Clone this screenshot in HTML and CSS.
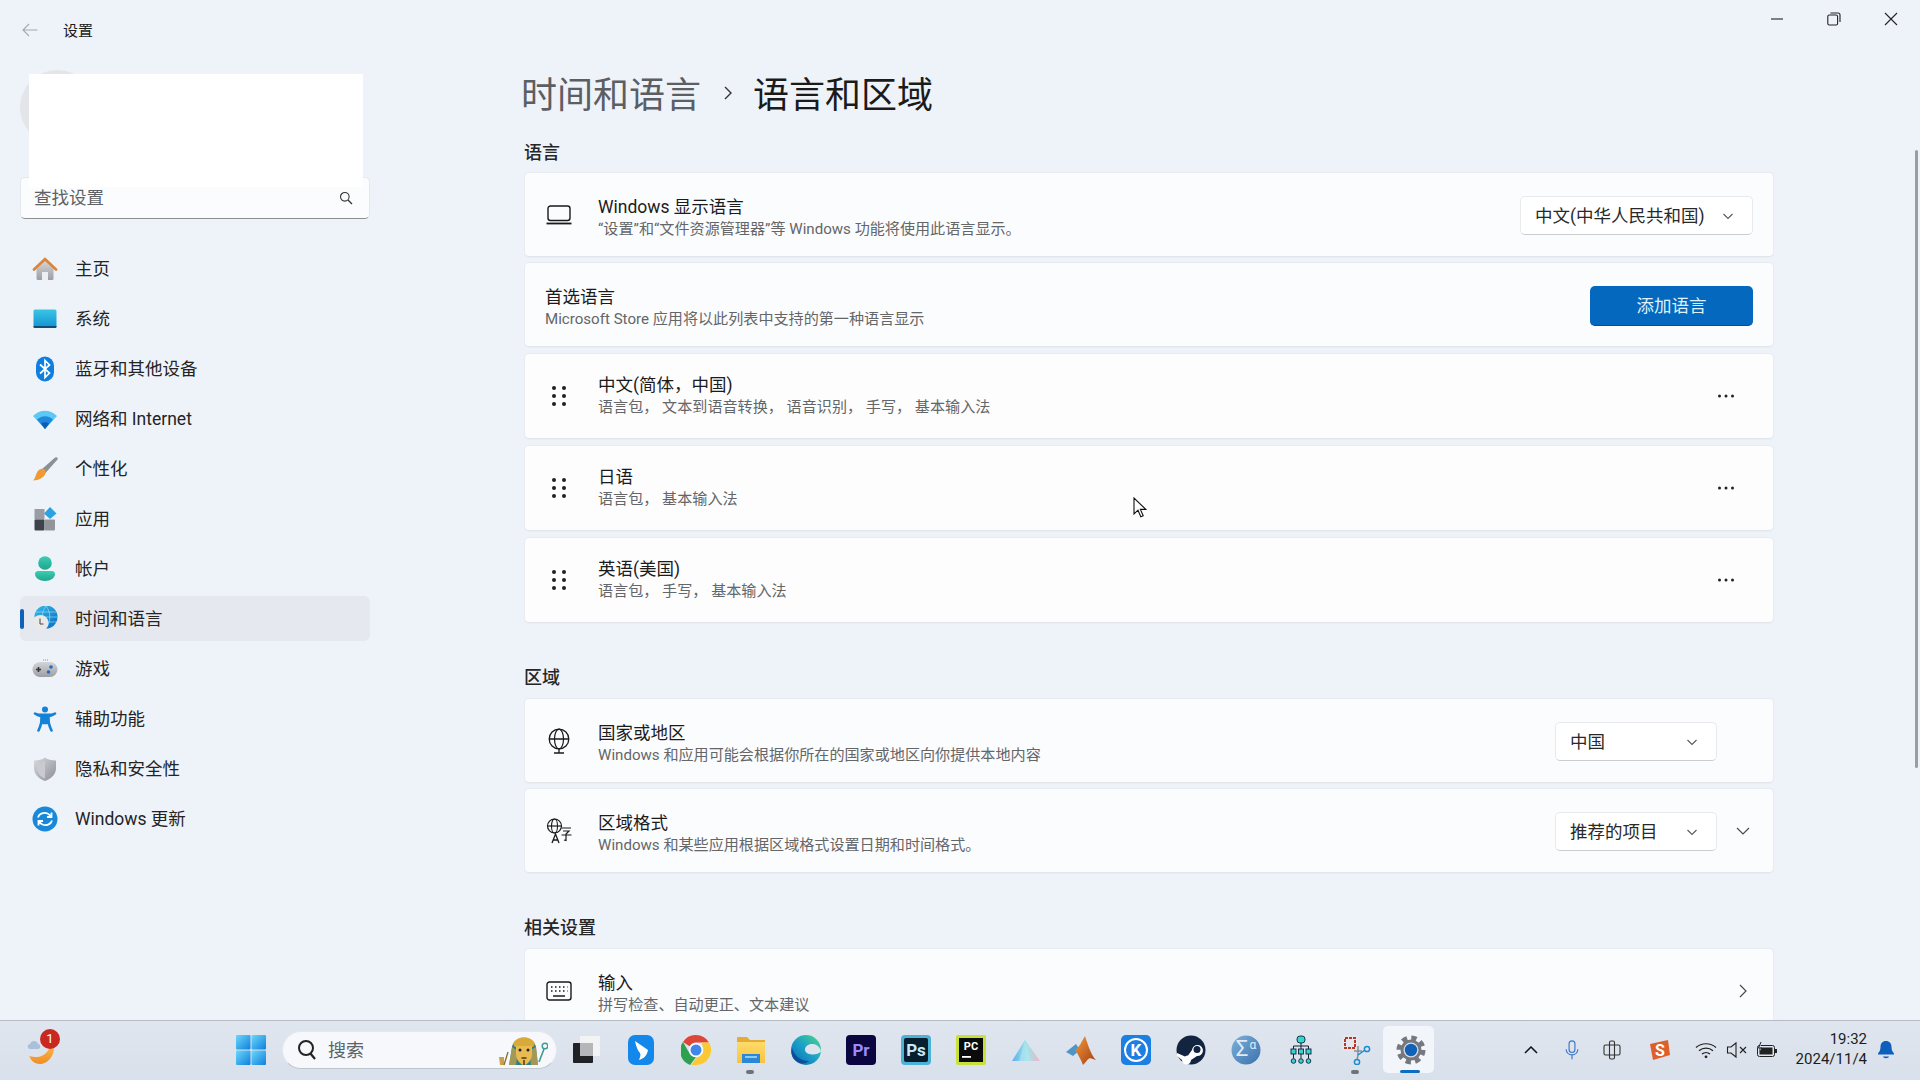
FILE: index.html
```html
<!DOCTYPE html>
<html lang="zh-CN">
<head>
<meta charset="utf-8">
<title>设置</title>
<link rel="stylesheet" href="styles.css">
</head>
<body>
<svg class="defs" aria-hidden="true">
  <defs>
    <linearGradient id="gGray" x1="0" y1="0" x2="0" y2="1"><stop offset="0" stop-color="#d4d5d8"/><stop offset="1" stop-color="#9c9ea3"/></linearGradient>
    <linearGradient id="gCyan" x1="0" y1="0" x2="0" y2="1"><stop offset="0" stop-color="#38c6e6"/><stop offset="1" stop-color="#1490cf"/></linearGradient>
    <linearGradient id="gTeal" x1="0" y1="0" x2="0" y2="1"><stop offset="0" stop-color="#3ccdb2"/><stop offset="1" stop-color="#1fa58f"/></linearGradient>
    <linearGradient id="gBlue" x1="0" y1="0" x2="1" y2="1"><stop offset="0" stop-color="#37bbe8"/><stop offset="1" stop-color="#0a6cc4"/></linearGradient>
    <linearGradient id="gShield" x1="0" y1="0" x2="1" y2="1"><stop offset="0" stop-color="#d8dade"/><stop offset="1" stop-color="#8b8e95"/></linearGradient>
    <linearGradient id="gWin" x1="0" y1="0" x2="1" y2="1"><stop offset="0" stop-color="#6bd8fa"/><stop offset="1" stop-color="#0f7fdc"/></linearGradient>
    <linearGradient id="gFolder" x1="0" y1="0" x2="0" y2="1"><stop offset="0" stop-color="#ffdb6b"/><stop offset="1" stop-color="#f7c43a"/></linearGradient>
    <linearGradient id="gEdge" x1="1" y1="0" x2="0" y2="1"><stop offset="0" stop-color="#4fd88a"/><stop offset=".5" stop-color="#1aa0c8"/><stop offset="1" stop-color="#0b62b4"/></linearGradient>
    <linearGradient id="gPrism" x1="0" y1="0" x2="1" y2="0"><stop offset="0" stop-color="#5cb0f0"/><stop offset=".55" stop-color="#9fe4e8"/><stop offset="1" stop-color="#f4b4c8"/></linearGradient>
    <linearGradient id="gMat" x1="0" y1="0" x2="1" y2="1"><stop offset="0" stop-color="#f59a3a"/><stop offset="1" stop-color="#a23c14"/></linearGradient>
    <linearGradient id="gSigma" x1="0" y1="0" x2="1" y2="1"><stop offset="0" stop-color="#7fb0dc"/><stop offset="1" stop-color="#3a72ac"/></linearGradient>
    <linearGradient id="gSun" x1="0" y1="0" x2="0" y2="1"><stop offset="0" stop-color="#fbb74a"/><stop offset="1" stop-color="#f08e24"/></linearGradient>
    <symbol id="chev" viewBox="0 0 12 12"><path d="M1.500 4 6 8.500 10.500 4" fill="none" stroke="#5a5a5a" stroke-width="1.100"/></symbol>
    <symbol id="chevBig" viewBox="0 0 16 16"><path d="M2 5 8 11 14 5" fill="none" stroke="#4a4a4a" stroke-width="1.200"/></symbol>
    <symbol id="chevRight" viewBox="0 0 16 16"><path d="M5 2 11 8 5 14" fill="none" stroke="#4a4a4a" stroke-width="1.200"/></symbol>
    <symbol id="drag" viewBox="0 0 14 22"><g fill="#222"><circle cx="2" cy="3" r="2"/><circle cx="12" cy="3" r="2"/><circle cx="2" cy="11" r="2"/><circle cx="12" cy="11" r="2"/><circle cx="2" cy="19" r="2"/><circle cx="12" cy="19" r="2"/></g></symbol>
    <symbol id="more" viewBox="0 0 18 4"><g fill="#222"><circle cx="2.500" cy="2" r="1.500"/><circle cx="9" cy="2" r="1.500"/><circle cx="15.500" cy="2" r="1.500"/></g></symbol>
  </defs>
</svg>

<div class="screen">
  <div class="window">
    <header class="titlebar">
      <svg class="back" viewBox="0 0 16 14"><path d="M15.500 7H1M7 1 1 7l6 6" fill="none" stroke="#a4a9b0" stroke-width="1.100"/></svg>
      <span class="app-title">设置</span>
      <div class="win-controls">
        <span class="win-btn"><svg viewBox="0 0 14 14" class="win-ico"><path d="M1 7H13" stroke="#222" stroke-width="1.100"/></svg></span>
        <span class="win-btn"><svg viewBox="0 0 14 14" class="win-ico"><rect x=".8" y="3" width="9.800" height="10" rx="1.500" fill="none" stroke="#222" stroke-width="1.100"/><path d="M3.500 1H11a2 2 0 0 1 2 2v7" fill="none" stroke="#222" stroke-width="1.100"/></svg></span>
        <span class="win-btn"><svg viewBox="0 0 14 14" class="win-ico"><path d="M1 1 13 13M13 1 1 13" stroke="#222" stroke-width="1.100"/></svg></span>
      </div>
    </header>

    <div class="body-row">
      <aside class="sidebar">
        <div class="profile"><div class="avatar"></div></div>
        <div class="search">
          <span class="search-text">查找设置</span>
          <svg class="search-ico" viewBox="0 0 14 14"><circle cx="5.800" cy="5.800" r="4.300" fill="none" stroke="#333" stroke-width="1.100"/><path d="M9 9l4 4" stroke="#333" stroke-width="1.200"/></svg>
        </div>
        <div class="redact"></div>
        <nav class="nav">
          <a class="nav-item">
            <svg class="nav-ico" viewBox="0 0 26 26"><path d="M4.500 13 13 5l8.500 8v9.500a1.500 1.500 0 0 1-1.500 1.500H6a1.500 1.500 0 0 1-1.500-1.500z" fill="url(#gGray)"/><rect x="10" y="16" width="6" height="8" fill="#eceef1"/><path d="M2 13.500 13 3.200l11 10.300" fill="none" stroke="#d9853a" stroke-width="2.800" stroke-linecap="round"/></svg>
            <span>主页</span>
          </a>
          <a class="nav-item">
            <svg class="nav-ico" viewBox="0 0 26 26"><rect x="1.500" y="3.500" width="23" height="18.500" rx="1.500" fill="url(#gCyan)"/><path d="M1.500 20h23v.5a1.500 1.500 0 0 1-1.500 1.500H3a1.500 1.500 0 0 1-1.500-1.500z" fill="#0c4e78"/></svg>
            <span>系统</span>
          </a>
          <a class="nav-item">
            <svg class="nav-ico" viewBox="0 0 26 26"><rect x="4" y=".5" width="18" height="25" rx="9" fill="#0f7fde"/><path d="M8 8.500 17.500 17 13 21.500V4.500L17.500 9 8 17.500" fill="none" stroke="#fff" stroke-width="1.700"/></svg>
            <span>蓝牙和其他设备</span>
          </a>
          <a class="nav-item">
            <svg class="nav-ico" viewBox="0 0 26 26"><path d="M1 10C8 3 18 3 25 10L13 23z" fill="#5cc8f4"/><path d="M5 13.500C10 9 16 9 21 13.500L13 23z" fill="#1e88dc"/><path d="M9 17.500c2.500-1.800 5.500-1.800 8 0L13 23z" fill="#0d5cb0"/></svg>
            <span>网络和 Internet</span>
          </a>
          <a class="nav-item">
            <svg class="nav-ico" viewBox="0 0 26 26"><path d="M25 1.500c.8.500 1 1.300.5 2L13.500 17l-4-3.500L22.500 2c.8-.8 1.700-1 2.500-.5z" fill="#8c8f96"/><path d="M9 13c3-.8 5.500 1.500 4.500 4.500-1 3.500-6.500 7-12.500 7 2.500-2.500 2.500-5 3.500-7 .8-2.300 2.500-4 4.500-4.500z" fill="#ef9a33"/></svg>
            <span>个性化</span>
          </a>
          <a class="nav-item">
            <svg class="nav-ico" viewBox="0 0 26 26"><rect x="2.500" y="3" width="10" height="10.500" fill="#9a9da4"/><rect x="2.500" y="13.500" width="10" height="11" rx="1" fill="#3e424a"/><rect x="12.500" y="13.500" width="10.500" height="11" rx="1" fill="#92959b"/><path d="M18 1l6.500 6.500L18 13l-6-5.500z" fill="#2aa2e4"/></svg>
            <span>应用</span>
          </a>
          <a class="nav-item">
            <svg class="nav-ico" viewBox="0 0 26 26"><circle cx="13" cy="7" r="6.800" fill="url(#gTeal)"/><path d="M3 18c0-2 1.500-3 3-3h14c1.500 0 3 1 3 3 0 4-4.500 7-10 7S3 22 3 18z" fill="url(#gTeal)"/></svg>
            <span>帐户</span>
          </a>
          <a class="nav-item active">
            <i class="nav-bar"></i>
            <svg class="nav-ico" viewBox="0 0 26 26"><circle cx="14" cy="11" r="11.500" fill="url(#gBlue)"/><path d="M2.500 11h23M14 0c-5 6-5 16 0 22M14 0c5 6 5 16 0 22M4 6h20M4 16h20" fill="none" stroke="#a8e2f5" stroke-width=".6"/><circle cx="8.500" cy="17" r="8" fill="#e9e9ea"/><path d="M8 12.500V18h3.500" fill="none" stroke="#444" stroke-width="1"/></svg>
            <span>时间和语言</span>
          </a>
          <a class="nav-item">
            <svg class="nav-ico" viewBox="0 0 26 26"><rect x=".5" y="6" width="25" height="15" rx="7.500" fill="url(#gGray)"/><path d="M6.500 11v5M4 13.500h5" stroke="#333" stroke-width="1.600"/><circle cx="19" cy="11" r="1.800" fill="#1f6cc0"/><circle cx="16.500" cy="16" r="1.800" fill="#1f6cc0"/><path d="M11 4h.8M13 4h.8M15 4h.8" stroke="#777"/></svg>
            <span>游戏</span>
          </a>
          <a class="nav-item">
            <svg class="nav-ico" viewBox="0 0 26 26"><circle cx="13" cy="3.500" r="3" fill="#1482d6"/><path d="M3 7.500c3 2 5 3 10 3s7-1 10-3M9.500 11c0 5 0 7-3 13.500M16.500 11c0 5 0 7 3 13.500M10 11h6v6h-6z" fill="#1482d6" stroke="#1482d6" stroke-width="2.600" stroke-linecap="round"/></svg>
            <span>辅助功能</span>
          </a>
          <a class="nav-item">
            <svg class="nav-ico" viewBox="0 0 26 26"><path d="M13 1.500C16 3.800 19.500 4.500 24 4.500V12c0 6-4 10.500-11 13C6 22.500 2 18 2 12V4.500c4.500 0 8-.7 11-3z" fill="url(#gShield)"/><path d="M13 4.500v18c-5-2-8-6-8-10.500V7.500c3 0 5.500-1 8-3z" fill="#c9cbd0"/></svg>
            <span>隐私和安全性</span>
          </a>
          <a class="nav-item">
            <svg class="nav-ico" viewBox="0 0 26 26"><circle cx="13" cy="13" r="12.500" fill="#1a88d8"/><path d="M6 11.500C7 7.500 12 6 15.500 7.500 17 8.200 18 9 19 10.500M19.500 6.500v4.500H15M20 14.500C19 18.500 14 20 10.500 18.500 9 17.800 8 17 7 15.500M6.500 19.500V15H11" fill="none" stroke="#fff" stroke-width="1.800"/></svg>
            <span>Windows 更新</span>
          </a>
        </nav>
      </aside>

      <main class="content">
        <h1 class="crumb"><span class="crumb-parent">时间和语言</span><svg class="crumb-sep" viewBox="0 0 10 16"><path d="M2 2l6 6-6 6" fill="none" stroke="#333" stroke-width="1.400"/></svg><span>语言和区域</span></h1>

        <h2 class="section section-first">语言</h2>
        <section class="card">
          <span class="ico-slot"><svg class="line-ico" viewBox="0 0 26 20"><rect x="2" y="1" width="22" height="14.500" rx="2.500" fill="none" stroke="#1a1a1a" stroke-width="1.400"/><path d="M.5 18.500h25" stroke="#1a1a1a" stroke-width="1.800"/></svg></span>
          <div class="txt">
            <div class="t">Windows 显示语言</div>
            <div class="s">“设置”和“文件资源管理器”等 Windows 功能将使用此语言显示。</div>
          </div>
          <div class="select select-wide"><span>中文(中华人民共和国)</span><svg class="chev"><use href="#chev"/></svg></div>
        </section>
        <section class="card gap5">
          <div class="txt txt-plain">
            <div class="t">首选语言</div>
            <div class="s">Microsoft Store 应用将以此列表中支持的第一种语言显示</div>
          </div>
          <button class="primary">添加语言</button>
        </section>
        <section class="card card-lang">
          <span class="ico-slot"><svg class="drag"><use href="#drag"/></svg></span>
          <div class="txt">
            <div class="t">中文(简体，中国)</div>
            <div class="s">语言包， 文本到语音转换， 语音识别， 手写， 基本输入法</div>
          </div>
          <span class="more-slot"><svg class="more"><use href="#more"/></svg></span>
        </section>
        <section class="card card-lang">
          <span class="ico-slot"><svg class="drag"><use href="#drag"/></svg></span>
          <div class="txt">
            <div class="t">日语</div>
            <div class="s">语言包， 基本输入法</div>
          </div>
          <span class="more-slot"><svg class="more"><use href="#more"/></svg></span>
        </section>
        <section class="card card-lang">
          <span class="ico-slot"><svg class="drag"><use href="#drag"/></svg></span>
          <div class="txt">
            <div class="t">英语(美国)</div>
            <div class="s">语言包， 手写， 基本输入法</div>
          </div>
          <span class="more-slot"><svg class="more"><use href="#more"/></svg></span>
        </section>

        <h2 class="section">区域</h2>
        <section class="card card-tight">
          <span class="ico-slot"><svg class="line-ico globe" viewBox="0 0 24 26"><circle cx="12" cy="11" r="9.800" fill="none" stroke="#1a1a1a" stroke-width="1.300"/><ellipse cx="12" cy="11" rx="4.500" ry="9.800" fill="none" stroke="#1a1a1a" stroke-width="1.200"/><path d="M2 11h20M12 21v4M7 25h10" stroke="#1a1a1a" stroke-width="1.300"/></svg></span>
          <div class="txt">
            <div class="t">国家或地区</div>
            <div class="s">Windows 和应用可能会根据你所在的国家或地区向你提供本地内容</div>
          </div>
          <div class="select"><span>中国</span><svg class="chev"><use href="#chev"/></svg></div>
          <span class="expand-slot"></span>
        </section>
        <section class="card gap5 card-tight">
          <span class="ico-slot"><svg class="line-ico region" viewBox="0 0 26 26"><circle cx="8.500" cy="8" r="7" fill="none" stroke="#1a1a1a" stroke-width="1.200"/><ellipse cx="8.500" cy="8" rx="3" ry="7" fill="none" stroke="#1a1a1a" stroke-width="1.100"/><path d="M1.500 8h14" stroke="#1a1a1a" stroke-width="1.200"/><path d="M6 25l3.500-9 3.500 9M7.300 22h4.500" fill="none" stroke="#1a1a1a" stroke-width="1.300"/><path d="M16 10h9M17 13h6l-3 3v6.500l-2-.5M15.500 17h10" fill="none" stroke="#1a1a1a" stroke-width="1.200"/></svg></span>
          <div class="txt">
            <div class="t">区域格式</div>
            <div class="s">Windows 和某些应用根据区域格式设置日期和时间格式。</div>
          </div>
          <div class="select"><span>推荐的项目</span><svg class="chev"><use href="#chev"/></svg></div>
          <span class="expand-slot"><svg class="chev-big"><use href="#chevBig"/></svg></span>
        </section>

        <h2 class="section">相关设置</h2>
        <section class="card card-tight">
          <span class="ico-slot"><svg class="line-ico" viewBox="0 0 26 20"><rect x="1" y="1" width="24" height="18" rx="2.500" fill="none" stroke="#1a1a1a" stroke-width="1.400"/><path d="M5 6h1.500M9 6h1.500M13 6h1.500M17 6h1.500M21 6h.5M5 10h1.500M9 10h1.500M13 10h1.500M17 10h1.500M21 10h.5" stroke="#1a1a1a" stroke-width="1.400"/><path d="M7 15h12" stroke="#1a1a1a" stroke-width="1.500"/></svg></span>
          <div class="txt">
            <div class="t">输入</div>
            <div class="s">拼写检查、自动更正、文本建议</div>
          </div>
          <span class="expand-slot"><svg class="chev-big"><use href="#chevRight"/></svg></span>
        </section>
      </main>
    </div>

    <div class="scrollbar"></div>
    <svg class="cursor" viewBox="0 0 14 22"><path d="M1 1v16l4-3.800 2.800 6.500 2.400-1-2.800-6.300h5.400z" fill="#fff" stroke="#111" stroke-width="1.100"/></svg>
  </div>

  <footer class="taskbar">
    <div class="tb-weather">
      <svg class="weather" viewBox="0 0 30 30"><path d="M27 10c1 9-5 19-14 19C7 29 3.500 25 2.500 21c8 3 18 0 21-11z" fill="url(#gSun)"/><path d="M3 14c-3 0-3-5 0-5 1-4 7-4 8 0 3 0 3 5 0 5z" fill="#a9bfdc"/></svg>
      <span class="badge">1</span>
    </div>
    <span class="tile tile-start">
      <svg class="start" viewBox="0 0 30 30"><rect x="0" y="0" width="14.500" height="14.500" rx="1" fill="url(#gWin)"/><rect x="15.500" y="0" width="14.500" height="14.500" rx="1" fill="url(#gWin)"/><rect x="0" y="15.500" width="14.500" height="14.500" rx="1" fill="url(#gWin)"/><rect x="15.500" y="15.500" width="14.500" height="14.500" rx="1" fill="url(#gWin)"/></svg>
    </span>
    <div class="tb-search">
      <svg class="tb-search-ico" viewBox="0 0 20 22"><circle cx="9" cy="9" r="7" fill="none" stroke="#222" stroke-width="2"/><path d="M13.500 14.500 18 20" stroke="#222" stroke-width="2.200"/></svg>
      <span class="tb-search-text">搜索</span>
      <svg class="pharaoh" viewBox="0 0 50 32">
        <path d="M14 13c1-10 22-12 24 0l2 18H11z" fill="#2f7f86"/>
        <path d="M15 10c3-9 19-9 22 0l-2 3H17z" fill="#d9a93a"/>
        <path d="M14 13l-3 18h7l2-14zM38 13l2 18h-7l-2-14z" fill="#c9a24a" opacity=".75"/>
        <path d="M18 12h16v8c0 6-5 11-8 11s-8-5-8-11z" fill="#e8bc52"/>
        <circle cx="22" cy="16" r="1.500" fill="#222"/><circle cx="30" cy="16" r="1.500" fill="#222"/>
        <path d="M23.500 24h5M26 26v5" stroke="#7a5a18" stroke-width="2"/>
        <path d="M41 28l5-13" stroke="#3f9c94" stroke-width="1.600"/><circle cx="47" cy="12" r="2.800" fill="none" stroke="#3f9c94" stroke-width="1.500"/><path d="M1 23h5v8H2z" fill="#c9a24a"/><path d="M6 31l4-13" stroke="#8a6a2a" stroke-width="1.300"/>
      </svg>
    </div>
    <span class="tile"><svg class="ti" viewBox="0 0 30 30"><rect x="9" y="1" width="20" height="20" fill="#f2f3f5"/><rect x="2" y="8" width="20" height="20" rx="1" fill="#202226"/><rect x="9" y="8" width="13" height="13" fill="#b4b6ba"/></svg></span>
    <span class="tile"><svg class="ti" viewBox="0 0 30 30"><rect x="2" y="0" width="26" height="30" rx="7" fill="#1488ea"/><path d="M9 6l13 9c-1 6-5 9-9 10 1-3 2-5 1-7-2-2-4-7-5-12z" fill="#fff"/></svg></span>
    <span class="tile"><svg class="ti" viewBox="0 0 30 30"><path d="M15 0a15 15 0 0 1 13 7.500H15a7.500 7.500 0 0 0-6.500 3.800L2 7A15 15 0 0 1 15 0z" fill="#de4638"/><path d="M2 7l6.500 11.300a7.500 7.500 0 0 0 6.500 4L9 30A15 15 0 0 1 2 7z" fill="#2da14f"/><path d="M28 7.500A15 15 0 0 1 15 30h-5l6-7.700a7.500 7.500 0 0 0 5.500-11L21 7.500z" fill="#fcc934"/><circle cx="15" cy="15" r="7" fill="#fff"/><circle cx="15" cy="15" r="5.500" fill="#3f87e8"/></svg></span>
    <span class="tile tile-dot"><svg class="ti" viewBox="0 0 30 30"><path d="M1 3a1 1 0 0 1 1-1h9l3 3h15v5H1z" fill="#e6ab32"/><path d="M1 7h28v21H1z" fill="url(#gFolder)"/><rect x="6" y="19" width="18" height="9" fill="#2b88d8"/><rect x="9" y="21" width="12" height="2" fill="#8dcbf3"/></svg><i class="dot"></i></span>
    <span class="tile"><svg class="ti" viewBox="0 0 30 30"><circle cx="15" cy="15" r="15" fill="url(#gEdge)"/><path d="M14 14.500c0-3 3.500-6 8-5.500 4 .5 7.500 3.500 8 7.500-2 2.500-8 3.500-12 2.500-2.500-.7-4-2.500-4-4.500z" fill="#dde4ee"/><path d="M1 13c2 7 8 13 17 13-4 4-12 3-16-3-1.500-3-2-7-1-10z" fill="#0a4f98"/></svg></span>
    <span class="tile"><svg class="ti logo-sq" viewBox="0 0 30 30"><rect width="30" height="30" rx="4" fill="#0b0640"/><text x="15" y="21" class="logo-t" fill="#9a8cff">Pr</text></svg></span>
    <span class="tile"><svg class="ti logo-sq" viewBox="0 0 30 30"><rect width="30" height="30" rx="4" fill="#4db3d6"/><rect x="3" y="3" width="24" height="24" rx="2" fill="#061e2e"/><text x="15" y="21" class="logo-t" fill="#c8e9f6">Ps</text></svg></span>
    <span class="tile"><svg class="ti logo-sq" viewBox="0 0 30 30"><rect width="30" height="30" rx="2" fill="#c7e03a"/><rect x="3" y="3" width="24" height="24" fill="#0b0b0b"/><text x="15" y="15" class="logo-s" fill="#fff">PC</text><rect x="6" y="21" width="9" height="1.800" fill="#fff"/></svg></span>
    <span class="tile"><svg class="ti" viewBox="0 0 30 30"><path d="M14 5 29 26H1z" fill="url(#gPrism)"/><path d="M14 5 20 26H8z" fill="#b6e6ee" opacity=".6"/></svg></span>
    <span class="tile"><svg class="ti" viewBox="0 0 30 30"><path d="M0 17 10 9l4 6-7 6z" fill="#4f96c8"/><path d="M19 1c3 9 6 19 11 24-3-1-5-2.500-7-1.500-2 1.500-3.500 4-6 6.500-2-5-5-11-8-15 4-2 7-9 10-14z" fill="url(#gMat)"/></svg></span>
    <span class="tile"><svg class="ti" viewBox="0 0 30 30"><rect width="30" height="30" rx="5" fill="#1d7fe2"/><circle cx="15" cy="15" r="11" fill="none" stroke="#fff" stroke-width="2"/><text x="15" y="21" class="logo-t" fill="#fff">K</text></svg></span>
    <span class="tile"><svg class="ti" viewBox="0 0 30 30"><circle cx="15" cy="15" r="14.500" fill="#12243f"/><path d="M1 18l8 3.500a4.500 4.500 0 0 1 3-1l4-5.500a5.500 5.500 0 1 1 5 6l-6 4a4.500 4.500 0 0 1-9 0L1 21z" fill="#fff"/><circle cx="21" cy="14.500" r="3.500" fill="#12243f"/></svg></span>
    <span class="tile"><svg class="ti" viewBox="0 0 30 30"><circle cx="15" cy="15" r="14.500" fill="url(#gSigma)"/><text x="11" y="21" class="logo-m" fill="#dfeaf6">Σ</text><text x="22" y="14" class="logo-a" fill="#dfeaf6">α</text></svg></span>
    <span class="tile"><svg class="ti" viewBox="0 0 30 30"><g fill="#33d6d0" stroke="#123" stroke-width=".9"><rect x="11" y="1" width="8" height="7" rx="3"/><rect x="5" y="14" width="5" height="5"/><rect x="12.500" y="14" width="5" height="5"/><rect x="20" y="14" width="5" height="5"/><circle cx="7.500" cy="26" r="2.300"/><circle cx="15" cy="26" r="2.300"/><circle cx="22.500" cy="26" r="2.300"/></g><path d="M15 8v6M7.500 14v-3h15v3M7.500 19v4.500M15 19v4.500M22.500 19v4.500" fill="none" stroke="#123" stroke-width="1"/></svg></span>
    <span class="tile tile-dot"><svg class="ti" viewBox="0 0 30 30"><rect x="1" y="0" width="16" height="16" rx="2" fill="#e6e7ea"/><rect x="4" y="3" width="10" height="10" fill="none" stroke="#b8372c" stroke-width="2" stroke-dasharray="3 1"/><path d="M13 16h8M17 11v6c0 3 0 5-1 8" fill="none" stroke="#8a8e95" stroke-width="1.500"/><circle cx="26" cy="14" r="2.600" fill="none" stroke="#1b8ccf" stroke-width="1.500"/><circle cx="16" cy="27" r="2.600" fill="none" stroke="#1b8ccf" stroke-width="1.500"/><path d="M17 20l7-5" stroke="#1b8ccf" stroke-width="1.500"/></svg><i class="dot"></i></span>
    <span class="tile tile-active"><svg class="ti" viewBox="0 0 30 30"><circle cx="15" cy="15" r="10.500" fill="#75787f"/><circle cx="15" cy="15" r="12" fill="none" stroke="#75787f" stroke-width="5" stroke-dasharray="5.200 4.220"/><circle cx="15" cy="15" r="7.500" fill="#d8dce2"/><circle cx="15" cy="15" r="6.200" fill="#0f62b8"/></svg><i class="bar"></i></span>

    <div class="tray">
      <span class="tr tr-40"><svg class="tr-chev" viewBox="0 0 14 8"><path d="M1 7l6-6 6 6" fill="none" stroke="#111" stroke-width="1.500"/></svg></span>
      <span class="tr tr-42"><svg class="tr-ico" viewBox="0 0 20 24"><rect x="6.500" y="1" width="7" height="14" rx="3.500" fill="none" stroke="#3a78c4" stroke-width="1.400"/><path d="M3 11c0 9 14 9 14 0M10 18v5" fill="none" stroke="#3a78c4" stroke-width="1.400"/></svg></span>
      <span class="tr tr-38"><svg class="tr-ico" viewBox="0 0 20 20"><rect x="2" y="5" width="16" height="10" rx="1.500" fill="none" stroke="#333" stroke-width="1.100"/><rect x="7.500" y="1" width="5" height="18" rx="1.500" fill="none" stroke="#333" stroke-width="1.100"/></svg></span>
      <span class="tr tr-58"><svg class="tr-ico sogou" viewBox="0 0 22 22"><path d="M1 5 19 1l2 15L4 21z" fill="#de5f2a"/><text x="11" y="17" class="logo-sg" fill="#fff">S</text></svg></span>
      <span class="tr tr-34"><svg class="tr-ico" viewBox="0 0 22 18"><path d="M1 6.500c5.500-5 14.500-5 20 0M4 9.800c4-3.500 10-3.500 14 0M7 13c2.300-2 5.700-2 8 0" fill="none" stroke="#222" stroke-width="1.200"/><circle cx="11" cy="15.800" r="1.400" fill="#222"/></svg></span>
      <span class="tr tr-28"><svg class="tr-ico" viewBox="0 0 22 18"><path d="M1.500 6h3.500L10 2v14l-5-4H1.500z" fill="none" stroke="#222" stroke-width="1.100"/><path d="M14 6l6 6M20 6l-6 6" stroke="#222" stroke-width="1.100"/></svg></span>
      <span class="tr tr-32"><svg class="tr-ico" viewBox="0 0 22 18"><rect x="1.500" y="4.500" width="17" height="11" rx="2" fill="#dfe6ef" stroke="#222"/><rect x="3.500" y="6.500" width="13" height="7" fill="#222"/><rect x="19" y="8" width="2" height="4" fill="#222"/><path d="M5 1 2.500 7H6L4 11" fill="#dfe6ef" stroke="#222" stroke-width="1"/></svg></span>
      <div class="clock"><span>19:32</span><span>2024/11/4</span></div>
      <span class="tr tr-bell"><svg class="tr-bell-ico" viewBox="0 0 18 20"><path d="M9 1c3.500 0 5.500 2.500 5.500 6 0 3 1 4.500 2.500 6.500v1H1v-1C2.500 11.500 3.500 10 3.500 7 3.500 3.500 5.500 1 9 1z" fill="#0f5fbd"/><path d="M6 16.500h6c-.5 2.300-5.500 2.300-6 0z" fill="#0f5fbd"/></svg></span>
    </div>
  </footer>
</div>
</body>
</html>
```

FILE: styles.css
```css
* { box-sizing: border-box; }
html, body { margin: 0; height: 100%; overflow: hidden; }
body {
  font-family: Roboto, "Noto Sans CJK SC", sans-serif;
  color: #1b1b1b;
  background: #eef3fa;
}
.defs { display: block; width: 0; height: 0; }

.screen { display: flex; flex-direction: column; height: 1080px; }
.window {
  position: relative;
  flex: 0 0 1020px;
  height: 1020px;
  overflow: hidden;
  display: flex;
  flex-direction: column;
  background: #eef3fa;
}

/* title bar */
.titlebar { flex: 0 0 60px; display: flex; align-items: center; padding-left: 22px; }
.back { width: 16px; height: 14px; }
.app-title { margin-left: 25px; padding-bottom: 2px; font-size: 15px; color: #1b1b1b; }
.win-controls { margin-left: auto; align-self: flex-start; display: flex; padding: 12px 1px 0 0; }
.win-btn { width: 57px; display: flex; justify-content: center; }
.win-ico { width: 14px; height: 14px; }

.body-row { flex: 1; display: flex; min-height: 0; }

/* sidebar */
.sidebar { position: relative; flex: 0 0 524px; padding-left: 20px; }
.profile { height: 117px; padding-top: 10px; }
.avatar { width: 75px; height: 75px; border-radius: 50%; background: #e3e5e8; }
.search {
  width: 350px;
  height: 42px;
  display: flex;
  align-items: center;
  padding: 0 16px 0 13px;
  background: #fbfcfe;
  border: 1px solid #e5e8ed;
  border-bottom: 1px solid #8c8e92;
  border-radius: 5px;
}
.search-text { padding-bottom: 4px; font-size: 17.5px; color: #5f6164; }
.search-ico { margin-left: auto; width: 14px; height: 14px; }
.redact { position: absolute; left: 29px; top: 14px; width: 334px; height: 113px; background: #fff; }

.nav { margin-top: 27px; width: 350px; display: flex; flex-direction: column; gap: 5px; }
.nav-item {
  position: relative;
  height: 45px;
  display: flex;
  align-items: center;
  padding-left: 12px;
  border-radius: 6px;
  font-size: 17.5px;
  color: #242424;
}
.nav-item > span { padding-bottom: 2px; }
.nav-item.active { background: #e5e8ef; }
.nav-bar { position: absolute; left: 0; top: 13px; width: 4px; height: 20px; border-radius: 2px; background: #0f62b8; }
.nav-ico { width: 26px; height: 26px; flex: none; margin-right: 17px; }

/* main */
.content { flex: 0 0 1250px; }
.crumb { margin: 0 0 0 -3px; padding-bottom: 2px; height: 66px; display: flex; align-items: center; font-size: 36px; font-weight: 400; color: #1b1b1b; }
.crumb-parent { color: #5b5e63; }
.crumb-sep { width: 10px; height: 16px; margin: 2px 20px 0 22px; }
.section { margin: 0; padding: 42px 0 7px; font-size: 18px; line-height: 26px; font-weight: 500; color: #262626; }
.section-first { padding: 14px 0 6px; }

.card {
  height: 85px;
  display: flex;
  align-items: center;
  padding-right: 20px;
  background: #fbfcfe;
  border: 1px solid #e8ebf1;
  border-bottom-color: #e2e5ea;
  border-radius: 5px;
  box-shadow: 0 1px 0 #eaedf3;
}
.gap5 { margin-top: 5px; }
.card-lang { height: 86px; margin-top: 6px; background: #fdfdfe; }
.card-tight { padding-right: 4px; }
.ico-slot { flex: 0 0 73px; padding-right: 5px; display: flex; justify-content: center; }
.line-ico { width: 26px; height: 20px; }
.globe { width: 24px; height: 26px; }
.region { width: 26px; height: 26px; }
.drag { width: 14px; height: 22px; }

.txt { flex: 1; margin-top: 7px; }
.card-lang .txt { margin-top: 0; }
.txt-plain { margin-left: 20px; }
.t { font-size: 17.5px; line-height: 21px; color: #1b1b1b; }
.s { margin-top: 1px; font-size: 15.1px; line-height: 21px; color: #646668; }

.select {
  flex: none;
  width: 162px;
  height: 39px;
  margin-top: 2px;
  display: flex;
  align-items: center;
  justify-content: space-between;
  padding: 0 18px 0 14px;
  font-size: 17.5px;
  color: #292929;
  background: #fff;
  border: 1px solid #e8eaee;
  border-bottom-color: #cbcdd1;
  border-radius: 5px;
}
.select > span { padding-bottom: 2px; }
.select-wide { width: 233px; padding: 0 18px 0 14px; }
.chev { width: 12px; height: 12px; flex: none; }
.expand-slot { flex: 0 0 52px; display: flex; justify-content: center; }
.chev-big { width: 16px; height: 16px; }
.more-slot { flex: 0 0 54px; display: flex; justify-content: center; }
.more { width: 18px; height: 4px; }
.primary {
  flex: none;
  width: 163px;
  height: 40px;
  margin-top: 3px;
  padding: 0 0 2px;
  border: 0;
  border-bottom: 1px solid #0a4f92;
  border-radius: 5px;
  background: #0568bf;
  color: #def1fb;
  font: 17.5px Roboto, "Noto Sans CJK SC", sans-serif;
}

.scrollbar { position: absolute; left: 1915px; top: 150px; width: 3px; height: 618px; border-radius: 2px; background: #999ea4; }
.cursor { position: absolute; left: 1133px; top: 497px; width: 14px; height: 22px; }

/* taskbar */
.taskbar {
  flex: 0 0 60px;
  display: flex;
  align-items: center;
  padding-bottom: 2px;
  background: linear-gradient(#e0e6ef, #d8e0eb);
  border-top: 1px solid #b6bcc4;
}
.tb-weather { position: relative; flex: 0 0 223px; height: 100%; padding: 14px 0 0 27px; }
.weather { display: block; width: 30px; height: 30px; }
.badge {
  position: absolute;
  left: 40px;
  top: 8px;
  width: 20px;
  height: 20px;
  border-radius: 50%;
  background: #c8281f;
  color: #fff;
  font-size: 13px;
  line-height: 20px;
  text-align: center;
}
.tile { position: relative; flex: 0 0 55px; height: 100%; display: flex; align-items: center; justify-content: center; }
.tile-start { margin-right: 4px; }
.start { width: 30px; height: 30px; }
.ti { width: 30px; height: 30px; display: block; }
.dot { position: absolute; left: 23px; bottom: 4px; width: 8px; height: 4px; border-radius: 2px; background: #707478; }
.tile-active::before {
  content: "";
  position: absolute;
  left: 0;
  top: 5px;
  width: 51px;
  height: 47px;
  background: #f2f5f9;
  border-radius: 5px;
}
.tile-active .ti { position: relative; }
.bar { position: absolute; left: 17px; bottom: 5px; width: 20px; height: 3px; border-radius: 2px; background: #0f6cc4; }
.logo-t { font: 700 17px Roboto, sans-serif; text-anchor: middle; }
.logo-s { font: 700 11px Roboto, sans-serif; text-anchor: middle; }
.logo-m { font: 400 22px Roboto, sans-serif; text-anchor: middle; }
.logo-a { font: 400 12px Roboto, sans-serif; text-anchor: middle; }
.logo-sg { font: 700 16px Roboto, sans-serif; text-anchor: middle; }

.tb-search {
  flex: 0 0 275px;
  height: 38px;
  margin-right: 1px;
  display: flex;
  align-items: center;
  padding: 0 8px 0 14px;
  background: #f6f8fb;
  border: 1px solid #e4e8ee;
  border-bottom-color: #bfc5cd;
  border-radius: 19px;
}
.tb-search-ico { width: 20px; height: 22px; }
.tb-search-text { margin-left: 11px; padding-bottom: 2px; font-size: 18px; color: #5f6266; }
.pharaoh { margin-left: auto; width: 50px; height: 32px; }

.tray { margin-left: 73px; display: flex; align-items: center; height: 100%; }
.tr { display: flex; justify-content: center; align-items: center; }
.tr-40 { width: 40px; }
.tr-42 { width: 42px; }
.tr-38 { width: 38px; }
.tr-58 { width: 58px; }
.tr-34 { width: 34px; }
.tr-28 { width: 28px; }
.tr-32 { width: 32px; }
.tr-bell { width: 38px; }
.tr-chev { width: 14px; height: 8px; }
.tr-ico { width: 22px; height: 20px; }
.sogou { width: 22px; height: 22px; }
.tr-bell-ico { width: 18px; height: 20px; }
.clock { width: 84px; padding-bottom: 2px; display: flex; flex-direction: column; align-items: flex-end; font-size: 15px; line-height: 20px; color: #1c1c1c; white-space: nowrap; }
```
